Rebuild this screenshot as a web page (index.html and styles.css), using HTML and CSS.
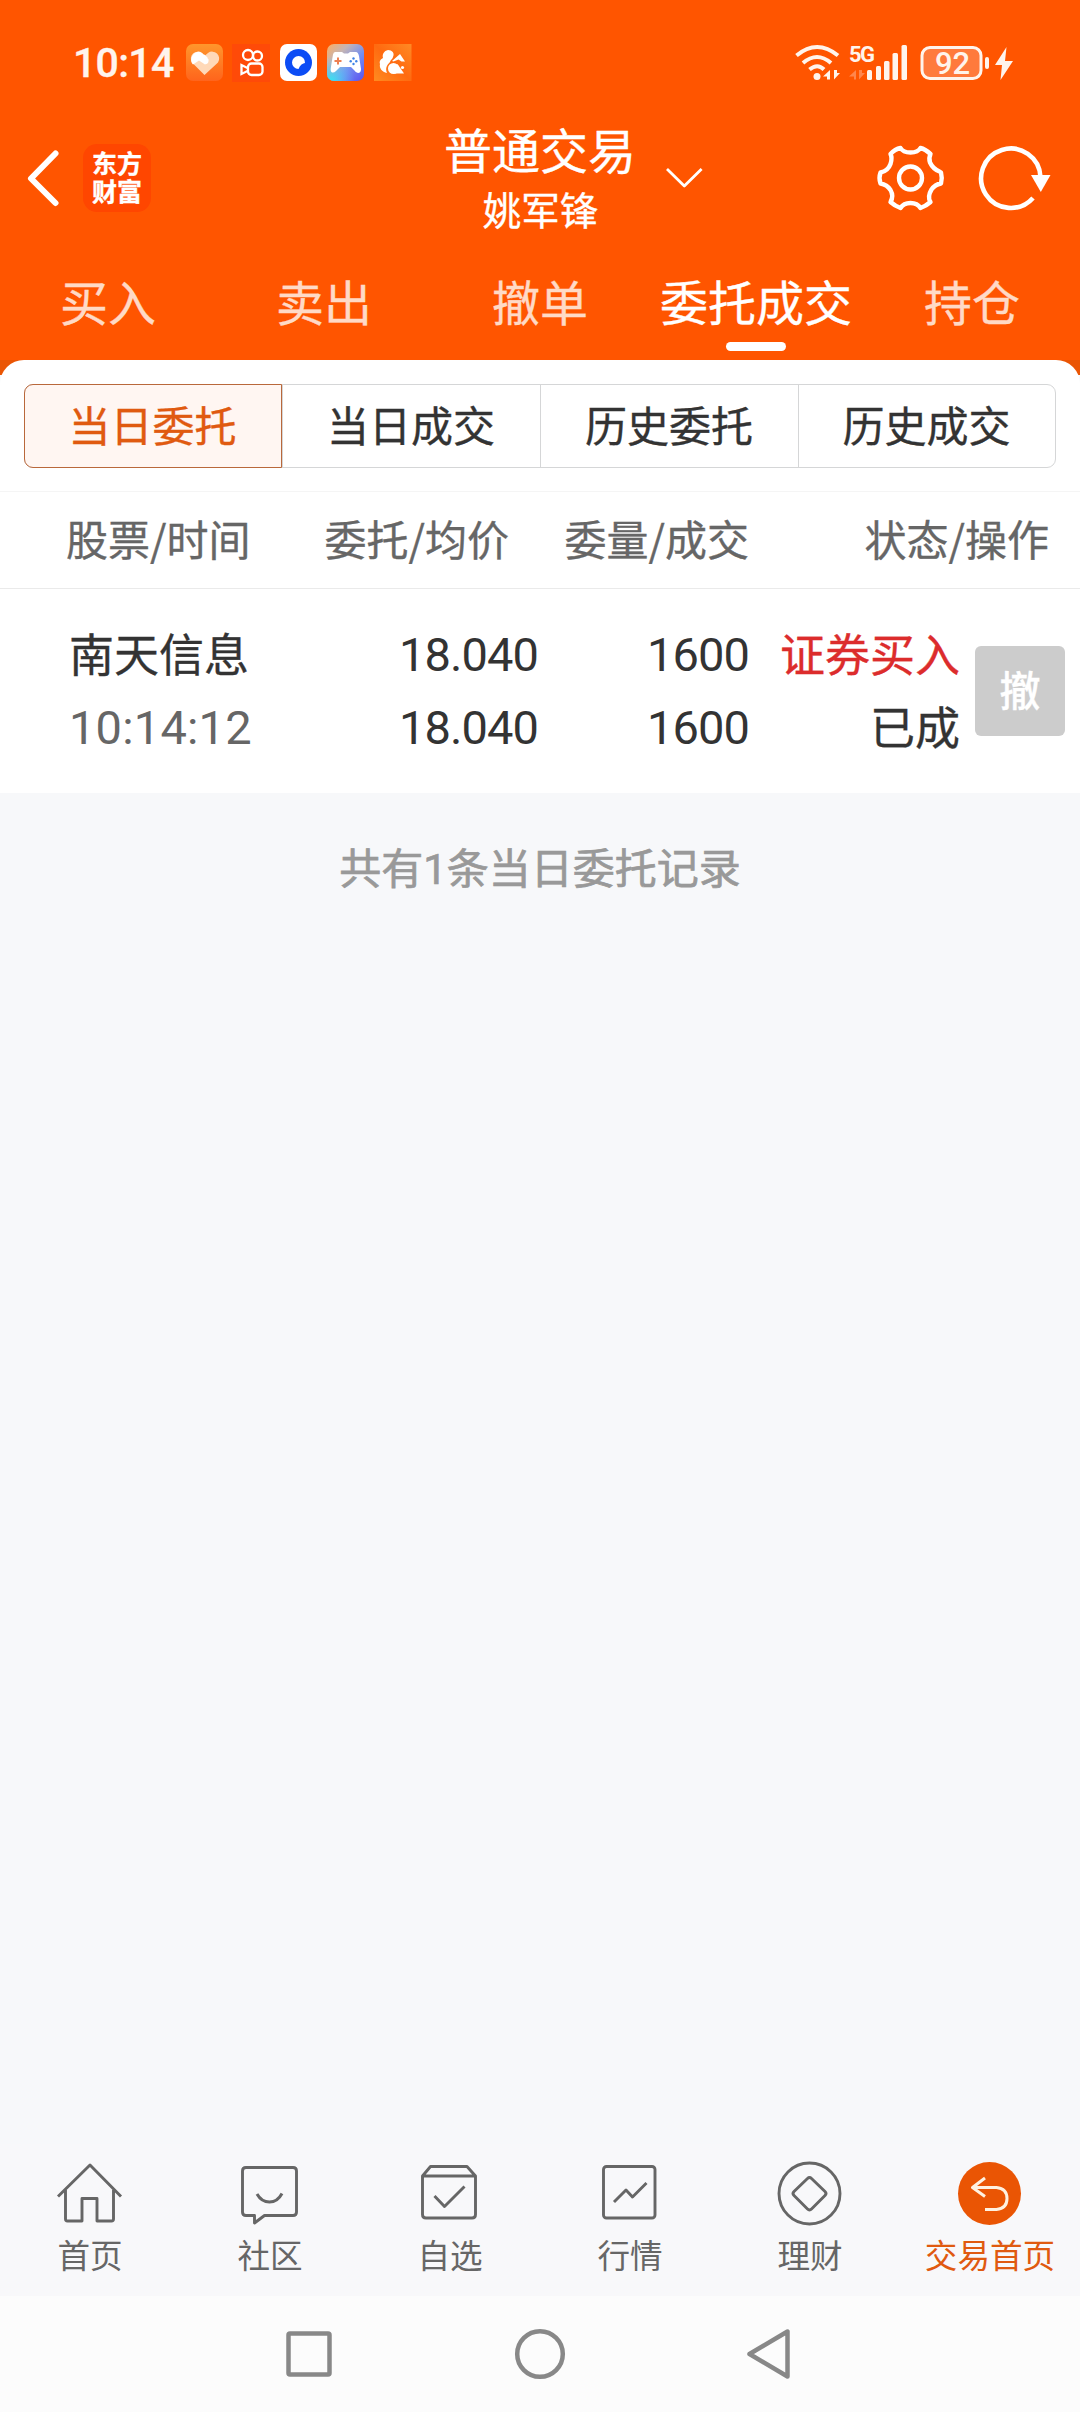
FILE: index.html
```html
<!DOCTYPE html>
<html lang="zh-CN">
<head>
<meta charset="utf-8">
<title>委托成交</title>
<link rel="stylesheet" href="styles.css">
</head>
<body>
<div class="screen">
  <header class="top">
    <div class="status">
      <span class="clock">10:14</span>
      <svg class="apps" width="226" height="38" viewBox="186 45 226 38">
        <defs>
          <linearGradient id="heartBg" x1="0" y1="0" x2="0" y2="1"><stop offset="0" stop-color="#ff962c"/><stop offset="1" stop-color="#ff641c"/></linearGradient>
          <linearGradient id="gameBg" x1="0" y1="0" x2="1" y2="1"><stop offset="0" stop-color="#ffad5e"/><stop offset=".3" stop-color="#c5b5b4"/><stop offset=".6" stop-color="#7590f0"/><stop offset="1" stop-color="#5a50f0"/></linearGradient>
          <radialGradient id="gameGlow" cx="0.1" cy="1" r=".65"><stop offset="0" stop-color="#35e6ee"/><stop offset="1" stop-color="#60c8ff" stop-opacity="0"/></radialGradient>
          <linearGradient id="ucBg" x1="0" y1="1" x2="1" y2="0"><stop offset="0" stop-color="#ff8b20"/><stop offset=".5" stop-color="#ff6a10"/><stop offset="1" stop-color="#ff8a24"/></linearGradient>
        </defs>
        <rect x="186" y="45" width="37" height="37" rx="7" fill="url(#heartBg)"/>
        <path d="M204.500 76l-12.500-12.500a7 7 0 0 1 10-9.500l3 2.500 3-2.500a7 7 0 0 1 10 9.500z" fill="#ffd9b8"/>
        <path d="M204.500 65l-5-4.500 5-5 3 3 1 4a3 3 0 0 1-4 2.500zM194 54.500a7 7 0 0 1 8-.5l7 7-4 4.500-6-4-6 4c-3-3-2-8 1-11z" fill="#fff"/>
        <rect x="232" y="45" width="38" height="38" fill="#ff4a08"/>
        <g fill="none" stroke="#fff" stroke-width="2.300"><circle cx="248" cy="56" r="5"/><circle cx="257.500" cy="57" r="4.500"/><rect x="248" y="64.500" width="14.500" height="11.500" rx="3.500"/><path d="M247.500 69l-6-3v9l6-3"/></g>
        <rect x="280" y="45" width="37" height="37" rx="7" fill="#fff"/>
        <circle cx="298.500" cy="63.500" r="13.500" fill="#0c4cf5"/>
        <path d="M298.500 57a6.500 6.500 0 1 0 0 13q1-3 3-4.500 2-1.500 3.500-1.500a6.500 6.500 0 0 0-6.500-7z" fill="#fff"/>
        <rect x="327" y="45" width="37" height="37" rx="7" fill="url(#gameBg)"/><rect x="327" y="45" width="37" height="37" rx="7" fill="url(#gameGlow)"/>
        <path d="M335 53h7l2 1.500h4l2-1.500h6q2 0 3 4l2 13q0 4-3 4-2 0-4-3l-3-3h-11l-4 4q-2 2-4 1.500-2-1-1-6l2-12q.5-2.500 2-2.500z" fill="#fff"/>
        <path d="M338 58.500v7M334.500 62h7" stroke="#ed8052" stroke-width="2"/>
        <g fill="#3c82e6"><circle cx="353.500" cy="59.500" r="1.200"/><circle cx="353.500" cy="65" r="1.200"/><circle cx="350.700" cy="62.300" r="1.200"/><circle cx="356.300" cy="62.300" r="1.200"/></g>
        <rect x="374" y="45" width="37.500" height="37" fill="url(#ucBg)"/>
        <path d="M387 74c-5-1-8-5-7-9-1-3 1-5 3-6-1-4 1-7 5-8 4 0 7 3 5 7 0 2-3 3-3 5-3 3-5 6-3 11z" fill="#fff"/>
        <path d="M392 62l8-7 5 7.500h-3.500l-3-2-5 2z" fill="#fff"/>
        <circle cx="393.500" cy="69.500" r="5.500" fill="#fff"/><path d="M397.500 65l6.500 9.500h-11z" fill="#fff"/><circle cx="402.500" cy="68.500" r="1.600" fill="#fff"/>
      </svg>
      <div class="signals">
        <svg width="220" height="44" viewBox="794 40 220 44">
          <g fill="none" stroke="#fff4ec" stroke-width="4"><path d="M796.500 55.500q20.500-17 41.500 0M803 63q14-12 28 0"/><path d="M809.500 69.500q8-6.500 14.500 0"/></g>
          <circle cx="817" cy="76.500" r="3.500" fill="#fff4ec"/>
          <path d="M830 70v9.500h-3v-3h-4zM834 70v9.500l6-6.500h-3v-3z" fill="#fff4ec"/>
          <path d="M856 70v9.500h-2v-3h-5zM859 70v9.500l6-6.500h-3v-3z" fill="#ff864c"/>
          <text class="net" x="849" y="62">5G</text>
          <g fill="#fff4ec"><rect x="867" y="70" width="5" height="10" rx="1.500"/><rect x="876" y="66" width="5" height="14" rx="1.500"/><rect x="884" y="61" width="5.500" height="19" rx="1.500"/><rect x="892.500" y="53" width="5.500" height="27" rx="1.500"/><rect x="901.500" y="45" width="5.500" height="35" rx="1.500"/></g>
          <rect x="922" y="47.500" width="59" height="31" rx="8" fill="#ff7a3c" stroke="#fff4ec" stroke-width="3"/>
          <text class="level" x="952.500" y="74" text-anchor="middle">92</text>
          <rect x="985" y="57" width="4" height="12" rx="2" fill="#fff4ec"/>
          <path d="M1006.500 47l-11.500 18h7l-1.500 15 12.500-19h-8z" fill="#fff4ec"/>
        </svg>
      </div>
    </div>
    <div class="bar">
      <svg class="back" width="34" height="58" viewBox="0 0 34 58"><path d="M29.500 4.500L5 29.500l24.500 24.500" fill="none" stroke="#fff" stroke-width="6" stroke-linecap="round" stroke-linejoin="round"/></svg>
      <div class="logo"><span>东方</span><span>财富</span></div>
      <div class="account">
        <div class="title">普通交易</div>
        <div class="name">姚军锋</div>
      </div>
      <svg class="drop" width="40" height="24" viewBox="664 166 40 24"><path d="M667 170l17.300 17 17.300-17" fill="none" stroke="#fff" stroke-width="2.800" stroke-linejoin="round"/></svg>
      <svg class="gear" width="70" height="70" viewBox="875 143 70 70"><g fill="none" stroke="#fff" stroke-width="4.400" stroke-linejoin="round"><path d="M900.500 148Q903 152.500 910.500 152.500T920.500 148Q925 149 930.500 154 928.500 158 930 162.500 933 169 939.500 171.500L941 172.500Q942.500 178 941 183.500 935 184.500 931.500 189.500 927 197 930.500 202 926 206 920.500 208 917.500 203 910.500 203T900.500 208Q895 206 890.500 202 894 196 890.500 190 887 184.500 880.500 183.500 878.500 178 880.500 172.500 888 171 890.500 164 892.500 158 890.500 154 895 149 900.500 148Z"/><circle cx="910.500" cy="178" r="11.500"/></g></svg>
      <svg class="refresh" width="74" height="70" viewBox="978 143 74 70"><path d="M1033 198a29.700 29.700 0 1 1 7.500-21" fill="none" stroke="#fff" stroke-width="4.600"/><path d="M1031 175h19.500l-9.700 17z" fill="#fff"/></svg>
    </div>
    <nav class="tabs"><span>买入</span><span>卖出</span><span>撤单</span><span class="on">委托成交</span><span>持仓</span></nav>
  </header>
  <main>
    <section class="panel">
      <div class="segments"><span class="picked">当日委托</span><span>当日成交</span><span>历史委托</span><span>历史成交</span></div>
      <div class="cols heads"><span>股票/时间</span><span>委托/均价</span><span>委量/成交</span><span>状态/操作</span></div>
      <div class="cols order">
        <div class="pair"><span>南天信息</span><span class="num time">10:14:12</span></div>
        <div class="pair num"><span>18.040</span><span>18.040</span></div>
        <div class="pair num"><span>1600</span><span>1600</span></div>
        <div class="pair"><span class="buy">证券买入</span><span>已成</span></div>
        <div class="cancel">撤</div>
      </div>
    </section>
    <p class="total">共有<span class="one">1</span>条当日委托记录</p>
  </main>
  <nav class="dock">
    <div><svg viewBox="55 2160 70 68"><path d="M58 2196.500L90 2165l31 31.500M65.500 2190v29q0 2 2 2H82v-22.500h15V2221h14.500q2 0 2-2v-29"/></svg>首页</div>
    <div><svg viewBox="235 2160 70 68"><path d="M246 2167.500h47q3.500 0 3.500 3.500v41q0 3.500-3.500 3.500h-28.500l-10 7.500v-7.500H246q-3.500 0-3.500-3.500v-41q0-3.500 3.500-3.500z"/><path d="M257 2194q4.500 8 12.500 8t12.500-8.500" stroke-width="3"/></svg>社区</div>
    <div><svg viewBox="415 2160 70 68"><path d="M422.500 2176l8-9.500H467l8.500 9.500v38.500q0 3.500-3.500 3.500h-46q-3.500 0-3.500-3.500zM422.500 2176h53M434.500 2196l10 10.500 20-20"/></svg>自选</div>
    <div><svg viewBox="595 2160 70 68"><rect x="603.500" y="2166.500" width="51.500" height="51.500" rx="3"/><path d="M614 2202l12-12 6.500 7 14-14"/></svg>行情</div>
    <div><svg viewBox="775 2160 70 68"><circle cx="809.500" cy="2193.500" r="30.500"/><path d="M811.500 2178.500l13.500 13q2 2 0 4l-13.500 13.500q-2 2-4 0L794 2195.500q-2-2 0-4l13.500-13q2-2 4 0z"/></svg>理财</div>
    <div class="here"><svg viewBox="955 2160 70 68"><circle cx="989.500" cy="2193.500" r="31.500" fill="#ea5504" stroke="none"/><path d="M985 2178l-12.500 9.500 12.500 9M973 2187.500h23.500q10.500 1 10.500 11t-10.500 11H985" stroke="#fff1e0" stroke-width="3"/></svg>交易首页</div>
  </nav>
  <div class="system">
    <svg width="520" height="60" viewBox="280 2324 520 60"><g fill="none" stroke="#888" stroke-width="4.500" stroke-linejoin="round"><rect x="288.500" y="2333.500" width="41" height="41" rx="1.500"/><circle cx="540" cy="2354" r="22.800"/><path d="M787.500 2331.500v45L749.500 2354z"/></g></svg>
  </div>
</div>
</body>
</html>
```
FILE: styles.css
```css
* { box-sizing: border-box; }
body { margin: 0; font-family: "Noto Sans CJK SC", sans-serif; color: #333; -webkit-text-stroke: 0.35px; }
svg { display: block; flex: none; }
.screen { width: 1080px; height: 2412px; display: flex; flex-direction: column; background: #f7f8fa; overflow: hidden; }
.top { height: 360px; background: #f50; color: #fff; flex: none; }
.status { height: 110px; display: flex; align-items: flex-start; padding: 40px 66px 0 73px; }
.clock { font: 500 41px/38px Roboto, sans-serif; width: 113px; margin-top: 4px; letter-spacing: -0.7px; color: #fff4ec; }
.apps { margin-top: 4px; }
.signals { margin-left: auto; }
.net { font: 700 22px Roboto, sans-serif; fill: #fff4ec; letter-spacing: -1.5px; }
.level { font: 500 31px Roboto, sans-serif; fill: #fff4ec; }
.bar { height: 136px; display: grid; grid-template-columns: 83px 68px 515px 211px 102px 101px; grid-template-rows: 136px; align-items: center; }
.bar > * { grid-row: 1; }
.back { grid-column: 1; margin-left: 26px; }
.logo { grid-column: 2; height: 68px; border-radius: 14px; background: #ff4600; font-weight: 700; font-size: 25px; line-height: 28px; display: flex; flex-direction: column; align-items: center; padding-top: 4px; }
.account { grid-column: 1 / -1; text-align: center; width: 1080px; height: 136px; }
.title { font-size: 48px; line-height: 56px; padding-top: 10px; }
.name { font-size: 38.5px; line-height: 48px; margin-top: 8px; padding-left: 1px; }
.drop { grid-column: 4; margin: -2px 0 0 -2px; }
.gear { grid-column: 5; margin-left: -2px; }
.refresh { grid-column: 6; margin-left: -1px; }
.tabs { height: 114px; display: grid; grid-template-columns: repeat(5, 216px); }
.tabs span { display: flex; flex-direction: column; align-items: center; font-size: 48px; line-height: 64px; padding-top: 22px; color: #ffdac6; }
.tabs .on { color: #fff; }
.tabs .on::after { content: ""; width: 60px; height: 9px; border-radius: 4.5px; background: #fff; margin-top: 10px; }
main { height: 1784px; background: linear-gradient(#ea5504 15px, #f7f8fa 15px); }
.panel { height: 433px; background: #fff; border-radius: 24px 24px 0 0; padding-top: 24px; }
.segments { width: 1032px; height: 84px; margin: 0 24px 23px; display: grid; grid-template-columns: 257px 258px 258px 257px; border: 1px solid #d5d6d7; border-radius: 9px; }
.segments span { font-size: 42px; line-height: 78px; text-align: center; border-left: 1px solid #d5d6d7; padding-right: 1px; }
.segments .picked { color: #e05a10; background: #fff6f2; border: 1px solid #b9683b; border-radius: 9px 0 0 9px; margin: -1px 0 -1px -1px; }
.cols { display: grid; padding-left: 66px; }
.heads { height: 98px; grid-template-columns: 184px 259px 240px 300px; font-size: 42px; line-height: 92px; color: #666; border-top: 1px solid #f5f5f5; border-bottom: 1px solid #eaeaea; text-align: right; white-space: nowrap; }
.heads span:first-child { text-align: left; }
.order { grid-template-columns: 190px 282px 211px 211px 105px; height: 204px; padding: 28px 0 0 66px; font-size: 45px; }
.pair { display: flex; flex-direction: column; text-align: right; line-height: 72px; white-space: nowrap; }
.pair:first-child { text-align: left; padding-left: 3px; }
.pair span { height: 73px; }
.num { font-family: Roboto, sans-serif; font-size: 47px; letter-spacing: -0.9px; line-height: 76px; -webkit-text-stroke: 0; }
.time { color: #666; letter-spacing: 0.2px; }
.buy { color: #dc2c2c; }
.cancel { width: 90px; height: 90px; margin: 29px 0 0 15px; border-radius: 6px; background: #ccc; color: #fff; font-size: 41px; font-weight: 500; line-height: 84px; text-align: center; }
.total { margin: 0; padding-top: 43px; font-size: 42px; line-height: 60px; text-align: center; color: #999; -webkit-text-stroke: 0.7px; }
.one { font-family: Roboto, sans-serif; }
.dock { height: 152px; display: grid; grid-template-columns: repeat(6, 180px); background: #f8f8fa; flex: none; padding-top: 16px; }
.dock div { display: flex; flex-direction: column; align-items: center; font-size: 32.6px; line-height: 52px; color: #666; -webkit-text-stroke: 0; }
.dock svg { width: 70px; height: 68px; fill: none; stroke: #666; stroke-width: 2.9; stroke-linejoin: round; }
.dock .here { color: #e05a10; }
.system { height: 116px; background: #fcfcfc; display: flex; justify-content: center; padding-top: 28px; flex: none; }
```
